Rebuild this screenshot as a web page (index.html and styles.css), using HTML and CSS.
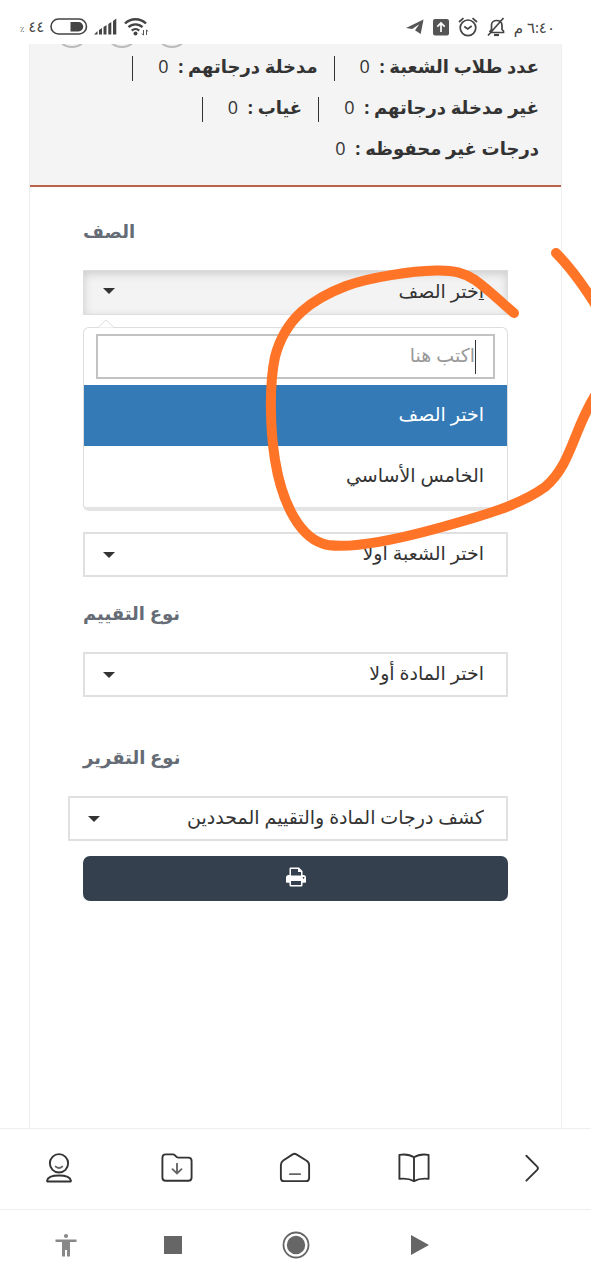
FILE: index.html
```html
<!DOCTYPE html>
<html lang="ar" dir="rtl">
<head>
<meta charset="utf-8">
<meta name="viewport" content="width=device-width, initial-scale=1">
<title>كشف الدرجات</title>
<link rel="stylesheet" href="styles.css">
</head>
<body>
<div class="phone">
  <header class="status" dir="ltr">
    <div class="status-group">
      <span class="battery-text"><small>٪</small> ٤٤</span>
      <svg class="icon" width="38" height="18" viewBox="0 0 38 18"><rect x="1" y="1" width="35.500" height="15" rx="7.500" fill="none" stroke="#444" stroke-width="1.600"/><path d="M20.500 4h8a4.500 4.500 0 0 1 0 9.500h-8z" fill="#444"/></svg>
      <svg class="icon signal" width="24" height="18" viewBox="0 0 24 18"><path d="M0 16.500 3.500 13v3.500zM5 12l3-2v6.500H5zM9.500 9l3-2v9.500h-3zM14.300 6l3-2v12.500h-3zM19 3l3.300-2.500v16H19z" fill="#444"/></svg>
      <svg class="icon wifi" width="26" height="20" viewBox="0 0 26 20"><g fill="none" stroke="#444" stroke-width="2.400"><path d="M1 6.500a15 15 0 0 1 21 0M4.500 10.200a10 10 0 0 1 14 0M7.800 13.600a5.400 5.400 0 0 1 7.400 0"/></g><circle cx="11.500" cy="16.500" r="2" fill="#444"/><path d="M19.500 13v5m-1.500-1.500 1.500 1.800M22.500 18v-5m1.500 1.500-1.500-1.800" stroke="#555" fill="none"/></svg>
    </div>
    <div class="status-group">
      <svg class="icon" width="18" height="18" viewBox="0 0 19 18"><path d="M0 10 18.500 1l-3 15.500-6-4 4.500-6.500-7.500 5z" fill="#555"/></svg>
      <svg class="icon app" width="16" height="17" viewBox="0 0 16 17"><rect width="16" height="16.500" rx="2" fill="#555"/><path d="M8 13V4M4.300 7.700 8 4l3.700 3.700" fill="none" stroke="#fff" stroke-width="1.700"/></svg>
      <svg class="icon" width="20" height="20" viewBox="0 0 20 20"><g fill="none" stroke="#444" stroke-width="1.700"><circle cx="10" cy="10.800" r="7.800"/><path d="M1 5 5.500 1.200M19 5l-4.500-3.800M6.300 9.500 9.700 12l4-3"/></g></svg>
      <svg class="icon bell" width="18" height="20" viewBox="0 0 18 20"><g fill="none" stroke="#444" stroke-width="1.700"><path d="M2.500 15.500h14V14L15 12.500V8c0-6-10.500-6-10.500 0v4.500L2.500 15M1 18.500 16.500 1"/><path d="M7 18h5" stroke-width="2.200"/></g></svg>
      <span class="clock" dir="rtl">٦:٤٠ م</span>
    </div>
  </header>

  <main class="sheet">
    <section class="summary">
      <div class="rings" dir="ltr"><i class="ring"></i><i class="ring"></i><i class="ring"></i></div>
      <div class="stats">
        <div class="stat-row"><span class="stat"><b>عدد طلاب الشعبة :</b> 0</span><span class="stat"><b>مدخلة درجاتهم :</b> 0</span></div>
        <div class="stat-row"><span class="stat"><b>غير مدخلة درجاتهم :</b> 0</span><span class="stat"><b>غياب :</b> 0</span></div>
        <div class="stat-row"><span class="stat last"><b>درجات غير محفوظه :</b> 0</span></div>
      </div>
    </section>

    <form class="form">
      <label class="label" for="grade">الصف</label>
      <button class="control picker" id="grade" type="button" aria-haspopup="listbox" aria-expanded="true"><span><u>ا</u>ختر الصف</span><svg class="caret" viewBox="0 0 12 6"><path d="M0 0h12L6 6z"/></svg></button>
      <div class="menu">
        <svg class="pointer" viewBox="0 0 16 9"><path d="M0 8.500 8 1l8 7.500" /></svg>
        <div class="search-box"><input class="search" type="text" placeholder="اكتب هنا" aria-label="اكتب هنا"><i class="cursor"></i></div>
        <ul class="options" role="listbox">
          <li class="option selected" role="option" aria-selected="true">اختر الصف</li>
          <li class="option" role="option" aria-selected="false">الخامس الأساسي</li>
        </ul>
      </div>

      <div class="select-box"><select class="control" aria-label="الشعبة"><option>اختر الشعبة أولا</option></select><svg class="caret" viewBox="0 0 12 6"><path d="M0 0h12L6 6z"/></svg></div>

      <label class="label assessment" for="assessment">نوع التقييم</label>
      <div class="select-box"><select class="control" id="assessment"><option>اختر المادة أولا</option></select><svg class="caret" viewBox="0 0 12 6"><path d="M0 0h12L6 6z"/></svg></div>

      <label class="label report" for="report">نوع التقرير</label>
      <div class="select-box wide"><select class="control" id="report"><option>كشف درجات المادة والتقييم المحددين</option></select><svg class="caret" viewBox="0 0 12 6"><path d="M0 0h12L6 6z"/></svg></div>

      <button class="print" type="button" aria-label="طباعة"><svg width="20" height="20" viewBox="0 0 20 20"><path fill="#fff" fill-rule="evenodd" d="M3.500 8V1.500Q3.500.5 4.500.5H13l3.500 3.500v4h.8Q20 8 20 10.500V15q0 .8-.8.800h-2.700v2.400q0 1.300-1.200 1.300H4.700q-1.200 0-1.200-1.300v-2.400H.8Q0 15.800 0 15v-4.500Q0 8 2.700 8zM5 8.500V2h7v3h3v3.500zM5 14v4h10v-4zM17.500 10a.8.800 0 1 0 .1 0z"/></svg></button>
    </form>
  </main>

  <nav class="app-nav" dir="ltr">
    <a class="nav-link" href="#" aria-label="الحساب"><svg width="28" height="32" viewBox="0 0 30 34"><g class="line"><circle cx="15" cy="12" r="9.800"/><path d="M2.200 30.500C3 26.500 9 25 15 25s12 1.500 12.800 5.500q.2 1-1 1H3.200q-1.200 0-1-1z"/></g><path class="thin" d="M11.500 15.500q3.500 3 7 0"/></svg></a>
    <a class="nav-link" href="#" aria-label="التنزيلات"><svg width="32" height="32" viewBox="0 0 34 34"><path class="line" d="M5 2.500h7.500q1.500 0 2.500 1.200l1.500 1.500q.8.800 2 .8H29q3.500 0 3.500 3.500V27q0 3.500-3.500 3.500H5Q1.500 30.500 1.500 27V6q0-3.500 3.500-3.500z"/><path class="thin" d="M17 12.500v10M12.200 18.200l4.800 4.500 4.800-4.500"/></svg></a>
    <a class="nav-link" href="#" aria-label="الرئيسية"><svg width="32" height="32" viewBox="0 0 34 34"><path class="line" d="M14.500 2.500q2-1.200 4 0L29 9q3 1.700 3 5v13.500q0 3.500-3.500 3.500h-23Q2 31 2 27.500V14q0-3.300 2.500-5z"/><path class="thin" d="M11.500 23.500h11"/></svg></a>
    <a class="nav-link" href="#" aria-label="الكتب"><svg width="32" height="32" viewBox="0 0 34 34"><path class="line" d="M1.500 3q9.500-1.500 15.500 2.500Q23 1.500 32.500 3v25.500q-9.500-1-15.500 2.500-6-3.500-15.500-2.500zM17 5.500V31"/></svg></a>
    <a class="nav-link" href="#" aria-label="رجوع"><svg width="32" height="32" viewBox="0 0 34 34"><path class="line" d="M11 4 22.500 15.500q1.700 1.500 0 3.500L11 30.500"/></svg></a>
  </nav>

  <nav class="system-nav" dir="ltr">
    <button class="sys" type="button" aria-label="إمكانية الوصول"><svg width="22" height="24" viewBox="0 0 22 24"><g fill="#888"><circle cx="11" cy="3" r="2.100"/><path d="M.5 6.500h21V9H15v14.500h-3V17h-2v6.500H7V9H.5z"/></g></svg></button>
    <button class="sys" type="button" aria-label="التطبيقات"><svg width="18" height="18" viewBox="0 0 18 18"><path fill="#666" d="M0 0h18v18H0z"/></svg></button>
    <button class="sys" type="button" aria-label="الشاشة الرئيسية"><svg width="28" height="28" viewBox="0 0 28 28"><circle cx="14" cy="14" r="12.500" fill="none" stroke="#666" stroke-width="1.800"/><circle cx="14" cy="14" r="9.200" fill="#666"/></svg></button>
    <button class="sys" type="button" aria-label="السابق"><svg width="18" height="20" viewBox="0 0 18 20"><path fill="#666" d="M0 0 18 10 0 20z"/></svg></button>
  </nav>

  <svg class="scribble" width="326" height="320" viewBox="265 240 326 320"><path d="M556 253Q574 271 595 304M596 394C573 430 572 464 545 487C516 508 470 519 435 529C398 539 355 549 328 545C300 540 282 503 275 460C270 428 269 385 275 357C285 318 312 299 346 286C370 277 412 271 436 270.500C454 270 464 273 475 280C489 290 502 303 514 313"/></svg>
</div>
</body>
</html>
```
FILE: styles.css
```css
* { box-sizing: border-box; }

body {
  margin: 0;
  background: #fff;
  color: #333;
  font-family: "Open Sans", "DejaVu Sans", sans-serif;
  font-size: 18px;
}

.phone {
  position: relative;
  display: flex;
  flex-direction: column;
  min-height: 100vh;
  overflow: hidden;
}

/* status bar */
.status {
  display: flex;
  justify-content: space-between;
  align-items: center;
  height: 44px;
  padding: 10px 36px 0 20px;
  color: #444;
}
.status-group { display: flex; align-items: center; gap: 6px; }
.status-group:last-child { gap: 9px; }
.battery-text, .clock { font-size: 15px; line-height: 20px; }
.battery-text small { font-size: 8px; }
.icon { display: block; flex: none; }

/* page sheet */
.sheet {
  flex: 1;
  margin: 0 29px;
  border: solid #eee;
  border-width: 0 1px;
}
.summary {
  height: 143px;
  background: #f4f4f4;
  border-bottom: 2px solid #b9644a;
}
.rings {
  display: flex;
  align-items: flex-end;
  gap: 16px;
  height: 4px;
  padding-left: 25px;
  overflow: hidden;
}
.ring {
  flex: none;
  width: 34px;
  height: 34px;
  border: 2px solid #bbb;
  border-radius: 50%;
}
.stats { padding: 0 22px; }
.stat-row { display: flex; gap: 16px; height: 41px; align-items: center; }
.stat {
  padding: 0 0 4px 25px;
  border-left: 1px solid #333;
  line-height: 21px;
  white-space: nowrap;
}
.stat b { margin-left: 5px; }
.last { border: 0; }

/* form */
.form { display: flex; flex-direction: column; padding: 32px 53px; }
.label {
  align-self: flex-end;
  margin-bottom: 27px;
  color: #656c75;
  font-weight: bold;
  line-height: 24px;
}
.control {
  display: flex;
  justify-content: space-between;
  align-items: center;
  width: 100%;
  height: 45px;
  margin: 0;
  padding: 0 22px 4px;
  appearance: none;
  background: #fff;
  border: 2px solid #e0e0e0;
  border-radius: 0;
  color: #333;
  font: inherit;
  font-size: 19px;
}
.picker {
  padding: 0 23px 4px;
  background: #f3f3f3;
  border: 1px solid #ddd;
  box-shadow: inset 0 3px 8px #ccc;
}
.caret { width: 12px; height: 6px; fill: #333; margin-left: -4px; }
.select-box { position: relative; }
.select-box .caret { position: absolute; left: 24px; top: 20px; }
.wide { margin-left: -15px; }

.menu {
  position: relative;
  margin: 12px 0 21px;
  padding-top: 6px;
  border: 1px solid #ddd;
  border-bottom: 4px solid #e4e4e4;
  border-radius: 6px;
}
.pointer {
  position: absolute;
  left: 14px;
  top: -9px;
  width: 16px;
  height: 9px;
  fill: #fff;
  stroke: #ddd;
}
.search-box { position: relative; padding: 0 12px; }
.search {
  display: block;
  width: 100%;
  height: 45px;
  padding: 0 18px 4px;
  border: 2px solid #c2c2c2;
  border-radius: 0;
  background: #fff;
  font: inherit;
  font-size: 19px;
}
.search::placeholder { color: #999; opacity: 1; }
.cursor { position: absolute; right: 31px; top: 6px; width: 1px; height: 34px; background: #333; }
.options { margin: 6px 0 0; padding: 0; list-style: none; }
.option { height: 61px; padding: 0 23px; font-size: 19px; line-height: 58px; }
.selected { background: #337ab7; color: #fff; }

.assessment { margin-top: 24px; }
.report { margin-top: 48px; }

.print {
  display: flex;
  justify-content: center;
  align-items: center;
  height: 45px;
  margin-top: 15px;
  padding: 0 0 4px;
  background: #34404e;
  border: 0;
  border-radius: 7px;
}

/* bottom bars */
.app-nav, .system-nav {
  display: grid;
  grid-template-columns: repeat(5, 1fr);
  justify-items: center;
  align-items: center;
}
.app-nav { height: 81px; padding-bottom: 2px; border-top: 1px solid #eee; }
.nav-link { display: block; height: 32px; }
.line { fill: none; stroke: #333; stroke-width: 2; stroke-linejoin: round; stroke-linecap: round; }
.thin { fill: none; stroke: #666; stroke-width: 2; stroke-linecap: round; }
.system-nav {
  grid-template-columns: 106fr 108fr 138fr 110fr 116fr;
  height: 71px;
  padding-left: 13px;
  border-top: 1px solid #eee;
}
.sys { display: flex; padding: 0; border: 0; background: none; }

/* hand-drawn highlight over the page */
.scribble {
  position: absolute;
  left: 265px;
  top: 240px;
  pointer-events: none;
  fill: none;
  stroke: #ff7426;
  stroke-width: 10;
  stroke-linecap: round;
  stroke-linejoin: round;
}
```
